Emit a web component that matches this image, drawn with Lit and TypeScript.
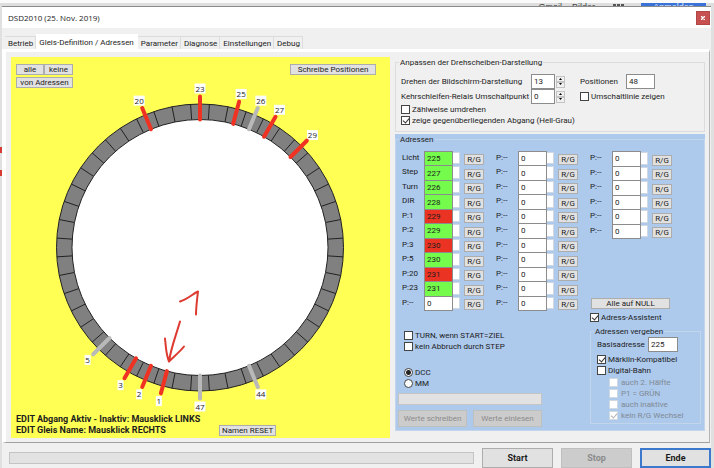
import { LitElement, html, svg, css } from "lit";
import { customElement, property, state } from "lit/decorators.js";
import { classMap } from "lit/directives/class-map.js";

const controls = css`
  * { box-sizing: border-box; }
  button, input {
    font: inherit;
    color: inherit;
    margin: 0;
    padding: 0;
    border-radius: 0;
  }
  button {
    display: block;
    background: #e1e1e1;
    border: 1px solid #adadad;
    white-space: nowrap;
    line-height: 9px;
    text-align: center;
  }
  button:disabled {
    background: #cccccc;
    border-color: #bfbfbf;
    color: #8b8b8b;
  }
  input[type="text"] {
    display: block;
    min-width: 0;
    background: #fff;
    border: 1px solid #8c8c8c;
    padding-left: 2px;
    outline: none;
  }
`;

interface Track {
  name: string;
  angle: number;
  active: boolean;
}

const TRACKS: Track[] = [
  { name: "23", angle: 0, active: true },
  { name: "25", angle: 15, active: true },
  { name: "26", angle: 22.5, active: false },
  { name: "27", angle: 30, active: true },
  { name: "29", angle: 45, active: true },
  { name: "44", angle: 157.5, active: false },
  { name: "47", angle: 180, active: false },
  { name: "1", angle: 195, active: true },
  { name: "2", angle: 202.5, active: true },
  { name: "3", angle: 210, active: true },
  { name: "5", angle: 225, active: false },
  { name: "20", angle: 337.5, active: true },
];

const CX = 189;
const CY = 190;

function polar(angle: number, r: number): [number, number] {
  const a = (angle * Math.PI) / 180;
  return [CX + r * Math.sin(a), CY - r * Math.cos(a)];
}

@customElement("turntable-view")
export class TurntableView extends LitElement {
  static styles = [
    controls,
    css`
      :host {
        position: relative;
        display: flex;
        flex-direction: column;
        justify-content: space-between;
        background: #ffff54;
        padding: 7px 6px 2px 5px;
      }
      .drawing {
        position: absolute;
        inset: 0;
        width: 100%;
        height: 100%;
      }
      .ring { fill: #808080; stroke: #222; }
      .pit { fill: #fff; stroke: #222; }
      .joint { stroke: #222; }
      .track { stroke: #b9b9b9; stroke-width: 4; stroke-linecap: round; }
      .track.active { stroke: #f03223; }
      .plate { fill: #fff; }
      .number {
        font: 8px "Open Sans", "Noto Sans", sans-serif;
        fill: #222;
        text-anchor: middle;
      }
      .pen {
        fill: none;
        stroke: #dd3a30;
        stroke-width: 2;
        stroke-linecap: round;
        stroke-linejoin: round;
      }
      .row {
        position: relative;
        display: flex;
        justify-content: space-between;
        align-items: flex-start;
      }
      .choose {
        display: grid;
        grid-template-columns: 28px 29px;
        gap: 2px 0;
      }
      .choose button, .write { height: 11px; }
      .wide { grid-column: span 2; }
      .write { width: 86px; margin-right: 8px; }
      .help {
        margin: 0;
        font: bold 9px/11px Roboto, "Liberation Sans", sans-serif;
      }
      .foot { align-items: flex-end; justify-content: flex-start; gap: 19px; }
      .foot button { width: 57px; height: 11px; }
    `,
  ];

  render() {
    return html`
      <svg class="drawing" viewBox="0 0 379 380" role="img" aria-label="Drehscheibe">
        <circle class="ring" cx=${CX} cy=${CY} r="143.5" />
        ${Array.from({ length: 48 }, (_, i) => {
          const [x1, y1] = polar(i * 7.5 + 3.75, 128);
          const [x2, y2] = polar(i * 7.5 + 3.75, 143.5);
          return svg`<line class="joint" x1=${x1} y1=${y1} x2=${x2} y2=${y2} />`;
        })}
        <circle class="pit" cx=${CX} cy=${CY} r="128" />
        ${TRACKS.map((t) => {
          const [x1, y1] = polar(t.angle, 128);
          const [x2, y2] = polar(t.angle, 151);
          const [lx, ly] = polar(t.angle, 159);
          const w = t.name.length > 1 ? 11 : 6;
          return svg`
            <rect class="plate" x=${lx - w / 2} y=${ly - 5} width=${w} height="10" />
            <text class="number" x=${lx} y=${ly + 3}>${t.name}</text>
            <line class=${t.active ? "track active" : "track"} x1=${x1} y1=${y1} x2=${x2} y2=${y2} />`;
        })}
        <path class="pen" d="M169 244 C176 242 181 237 187 234 C186 242 185 250 185 257" />
        <path class="pen" d="M169 264 C165 278 160 290 158 304 M154 281 C155 290 155 297 158 304 C163 299 169 294 173 289" />
      </svg>
      <div class="row">
        <div class="choose">
          <button>alle</button>
          <button>keine</button>
          <button class="wide">von Adressen</button>
        </div>
        <button class="write">Schreibe Positionen</button>
      </div>
      <div class="row foot">
        <p class="help">
          EDIT Abgang Aktiv - Inaktiv: Mausklick LINKS<br />
          EDIT Gleis Name: Mausklick RECHTS
        </p>
        <button>Namen RESET</button>
      </div>
    `;
  }
}

interface Address {
  label: string;
  value: string;
  tone?: "green" | "red";
}

const ASSIGNED: Address[] = [
  { label: "Licht", value: "225", tone: "green" },
  { label: "Step", value: "227", tone: "green" },
  { label: "Turn", value: "226", tone: "green" },
  { label: "DIR", value: "228", tone: "green" },
  { label: "P:1", value: "229", tone: "red" },
  { label: "P:2", value: "229", tone: "green" },
  { label: "P:3", value: "230", tone: "red" },
  { label: "P:5", value: "230", tone: "green" },
  { label: "P:20", value: "231", tone: "red" },
  { label: "P:23", value: "231", tone: "green" },
  { label: "P:--", value: "0" },
];

const blank = (n: number): Address[] =>
  Array.from({ length: n }, () => ({ label: "P:--", value: "0" }));

@customElement("address-list")
export class AddressList extends LitElement {
  @property({ attribute: false }) rows: Address[] = [];

  static styles = [
    controls,
    css`
      :host { display: block; }
      .list {
        display: grid;
        grid-auto-rows: 1fr;
        height: 100%;
      }
      .entry {
        display: grid;
        grid-template-columns: 22px 29px 7px 20px;
        align-items: stretch;
      }
      label { line-height: 14px; white-space: nowrap; }
      input.value { margin-bottom: -1px; }
      input.green { background: #75fb4c; }
      input.red { background: #ea3323; }
      .spin { background: #fff; border: 1px solid #d0d8e4; border-left: 0; margin: 1px 0; }
      .flip { align-self: end; height: 11px; width: 20px; margin-left: 4px; }
    `,
  ];

  render() {
    return html`<div class="list">
      ${this.rows.map(
        (r, i) => html`<div class="entry">
          <label for="a${i}">${r.label}</label>
          <input id="a${i}" type="text" .value=${r.value}
            class=${classMap({ value: true, green: r.tone === "green", red: r.tone === "red" })} />
          <span class="spin"></span>
          <button class="flip">R/G</button>
        </div>`
      )}
    </div>`;
  }
}

@customElement("app-root")
export class AppRoot extends LitElement {
  @state() private tab = "Gleis-Definition / Adressen";

  static styles = [
    controls,
    css`
      :host {
        display: grid;
        grid-template-columns: 2px minmax(0, 1fr) 3px;
        grid-template-rows: 6px auto;
        background: #e0e0e0;
        color: #1c1c1c;
        font: 8px/11px Roboto, "Liberation Sans", sans-serif;
      }
      .browser {
        grid-column: 1 / -1;
        display: flex;
        justify-content: flex-end;
        gap: 10px;
        overflow: hidden;
        padding: 3px 8px 0 0;
        background: linear-gradient(#fafafa 3px, #dedede 3px);
        font: 9px/9px "Liberation Sans", Arial, sans-serif;
      }
      .browser a { color: #444; text-decoration: none; }
      .apps { width: 12px; height: 2px; margin: 1px 6px 0 8px; background: repeating-linear-gradient(90deg, #555 0 3px, transparent 3px 4px); }
      .browser .login { width: 65px; text-align: center; background: #3a72d8; color: #dfe8fa; }
      .gutter {
        background: linear-gradient(transparent 141px, #d83a34 141px 147px, transparent 147px 164px, #d83a34 164px 170px, transparent 170px);
      }
      .window { background: #f0f0f0; border-top: 1px solid #8a8a8a; }
      .title {
        display: flex;
        align-items: center;
        justify-content: space-between;
        height: 21px;
        padding: 0 1px 0 6px;
        background: #fff;
      }
      h1 { margin: 0; font: 8px/11px "Open Sans", "Noto Sans", sans-serif; }
      .close { display: grid; place-items: center; width: 14px; height: 14px; background: #c75050; border-color: #b04646; }
      .tabs { display: flex; align-items: flex-end; height: 21px; padding-left: 3px; }
      .tab {
        height: 13px;
        padding: 0 2px 0 3px;
        background: #f0f0f0;
        border: 1px solid #dcdcdc;
        border-bottom: 0;
        border-left: 0;
      }
      .tab.current { height: 15px; padding: 0 3px; background: #fff; border-color: #fff; }
      .page {
        display: grid;
        grid-template-columns: minmax(0, 1fr) 310px;
        gap: 5px;
        margin-right: 1px;
        padding: 5px 4px 4px 5px;
        border: 0 solid #fff;
        border-width: 3px 1px 1px 4px;
        border-right-color: #b4b4b4;
        border-bottom-color: #a0a0a0;
      }
      fieldset { min-width: 0; margin: 0; padding: 0; border: 1px solid #dcdcdc; }
      legend { padding: 0 1px; margin-left: 3px; height: 11px; }
      .side { display: flex; flex-direction: column; gap: 2px; padding-bottom: 7px; }
      .view { padding: 6px 0 5px 5px; }
      .fields {
        display: grid;
        grid-template-columns: 130px 24px 10px 15px 46px 29px;
        grid-auto-rows: 15px;
        align-items: center;
        white-space: nowrap;
      }
      .fields input[type="text"] { height: 15px; }
      .far { grid-column: 5; }
      .far-wide { grid-column: 5 / span 2; }
      .stepper { display: grid; padding-left: 1px; }
      .stepper button { display: grid; place-items: center; width: 9px; height: 6px; border-color: #c4c4c4; background: #f0f0f0; }
      .check { display: flex; align-items: center; gap: 2px; height: 11px; white-space: nowrap; }
      .check input {
        appearance: none;
        flex: none;
        position: relative;
        width: 9px;
        height: 9px;
        background: #fff;
        border: 1px solid #444;
      }
      .check input[type="checkbox"]:checked::after {
        content: "";
        position: absolute;
        left: 2px;
        top: 0;
        width: 3px;
        height: 5px;
        border: solid #333;
        border-width: 0 1px 1px 0;
        transform: rotate(40deg);
      }
      .check input[type="radio"] { border-radius: 50%; }
      .check input[type="radio"]:checked { background: radial-gradient(#222 2px, #fff 3px); }
      .check input:disabled { border-color: #d0d8e0; }
      .check input[type="checkbox"]:disabled:checked::after { border-color: #b4b4b4; }
      .check:has(input:disabled) { color: #7f8994; }
      .blue { background: #adc9ec; }
      .blue fieldset { border-color: #c3d5ea; }
      .body { display: grid; grid-template-columns: 192px minmax(0, 1fr); padding: 6px 3px 3px 2px; }
      .pair { display: grid; grid-template-columns: 94px 94px; height: 159px; padding-left: 4px; }
      .triple { height: 87px; }
      .options { margin: 20px 0 0 6px; }
      .mode { margin: 15px 0 4px 6px; }
      .bar { height: 12px; background: #e2e2e2; border: 1px solid #c4c4c4; }
      .progress { width: 144px; }
      .values { display: grid; grid-template-columns: 69px 69px; gap: 6px; margin-top: 5px; }
      .values button { height: 17px; }
      .clear { width: 79px; height: 11px; margin: 60px 0 3px 1px; }
      .assist { margin: 3px 0 0; }
      .assign { padding: 0 2px 2px 6px; }
      .base { display: grid; grid-template-columns: 51px 30px; align-items: center; margin-bottom: 2px; }
      .base input { height: 15px; }
      .sub { margin: 1px 0 0 12px; }
      .sub .check { gap: 3px; }
      .footer {
        display: grid;
        grid-template-columns: minmax(0, 1fr) 71px 71px 71px;
        gap: 8px;
        align-items: center;
        margin-top: 5px;
        padding-left: 7px;
      }
      .footer button { height: 20px; font: bold 9px/11px Roboto, "Liberation Sans", sans-serif; }
      .footer .ende { border: 2px solid #3c78cc; }
    `,
  ];

  private check(text: string, checked = false, disabled = false) {
    return html`<label class="check">
      <input type="checkbox" ?checked=${checked} ?disabled=${disabled} />${text}
    </label>`;
  }

  private stepper(name: string) {
    return html`<span class="stepper">
      <button aria-label="${name} erhöhen"><svg width="5" height="3" viewBox="0 0 5 3"><path d="M1 3L2.500 1L4 3z" /></svg></button>
      <button aria-label="${name} verringern"><svg width="5" height="3" viewBox="0 0 5 3"><path d="M1 0L2.500 2L4 0z" /></svg></button>
    </span>`;
  }

  render() {
    const tabs = ["Betrieb", "Gleis-Definition / Adressen", "Parameter", "Diagnose", "Einstellungen", "Debug"];
    return html`
      <nav class="browser">
        <a href="#">Gmail</a><a href="#">Bilder</a><span class="apps"></span><a class="login" href="#">Anmelden</a>
      </nav>
      <div class="gutter"></div>
      <main class="window">
        <header class="title">
          <h1>DSD2010 (25. Nov. 2019)</h1>
          <button class="close" aria-label="Schließen">
            <svg width="4" height="4" viewBox="0 0 4 4"><path d="M0 0L4 4M4 0L0 4" stroke="#fff" stroke-width="1.400" /></svg>
          </button>
        </header>
        <div class="tabs" role="tablist">
          ${tabs.map(
            (t) => html`<button role="tab" aria-selected=${t === this.tab}
              class=${classMap({ tab: true, current: t === this.tab })}
              @click=${() => (this.tab = t)}>${t}</button>`
          )}
        </div>
        <div class="page">
          <turntable-view></turntable-view>
          <div class="side">
            <fieldset>
              <legend>Anpassen der Drehscheiben-Darstellung</legend>
              <div class="view">
                <div class="fields">
                  <label for="turn">Drehen der Bildschirm-Darstellung</label>
                  <input id="turn" type="text" value="13" />
                  ${this.stepper("Drehung")}
                  <label class="far" for="count">Positionen</label>
                  <input id="count" type="text" value="48" />
                  <label for="relay">Kehrschleifen-Relais Umschaltpunkt</label>
                  <input id="relay" type="text" value="0" />
                  ${this.stepper("Umschaltpunkt")}
                  <div class="far-wide">${this.check("Umschaltlinie zeigen")}</div>
                </div>
                ${this.check("Zählweise umdrehen")}
                ${this.check("zeige gegenüberliegenden Abgang (Hell-Grau)", true)}
              </div>
            </fieldset>
            <div class="blue">
              <fieldset>
                <legend>Adressen</legend>
                <div class="body">
                  <div>
                    <div class="pair">
                      <address-list .rows=${ASSIGNED}></address-list>
                      <address-list .rows=${blank(11)}></address-list>
                    </div>
                    <div class="options">
                      ${this.check("TURN, wenn START=ZIEL")} ${this.check("kein Abbruch durch STEP")}
                    </div>
                    <div class="mode">
                      <label class="check"><input type="radio" name="mode" checked />DCC</label>
                      <label class="check"><input type="radio" name="mode" />MM</label>
                    </div>
                    <div class="bar progress"></div>
                    <div class="values">
                      <button disabled>Werte schreiben</button>
                      <button disabled>Werte einlesen</button>
                    </div>
                  </div>
                  <div>
                    <address-list class="triple" .rows=${blank(6)}></address-list>
                    <button class="clear">Alle auf NULL</button>
                    ${this.check("Adress-Assistent", true)}
                    <fieldset class="assist">
                      <legend>Adressen vergeben</legend>
                      <div class="assign">
                        <div class="base">
                          <label for="base">Basisadresse</label>
                          <input id="base" type="text" value="225" />
                        </div>
                        ${this.check("Märklin-Kompatibel", true)} ${this.check("Digital-Bahn")}
                        <div class="sub">
                          ${this.check("auch 2. Hälfte", false, true)} ${this.check("P1 = GRÜN", false, true)}
                          ${this.check("auch inaktive", false, true)} ${this.check("kein R/G Wechsel", true, true)}
                        </div>
                      </div>
                    </fieldset>
                  </div>
                </div>
              </fieldset>
            </div>
          </div>
        </div>
        <footer class="footer">
          <div class="bar"></div>
          <button>Start</button>
          <button disabled>Stop</button>
          <button class="ende">Ende</button>
        </footer>
      </main>
    `;
  }
}
